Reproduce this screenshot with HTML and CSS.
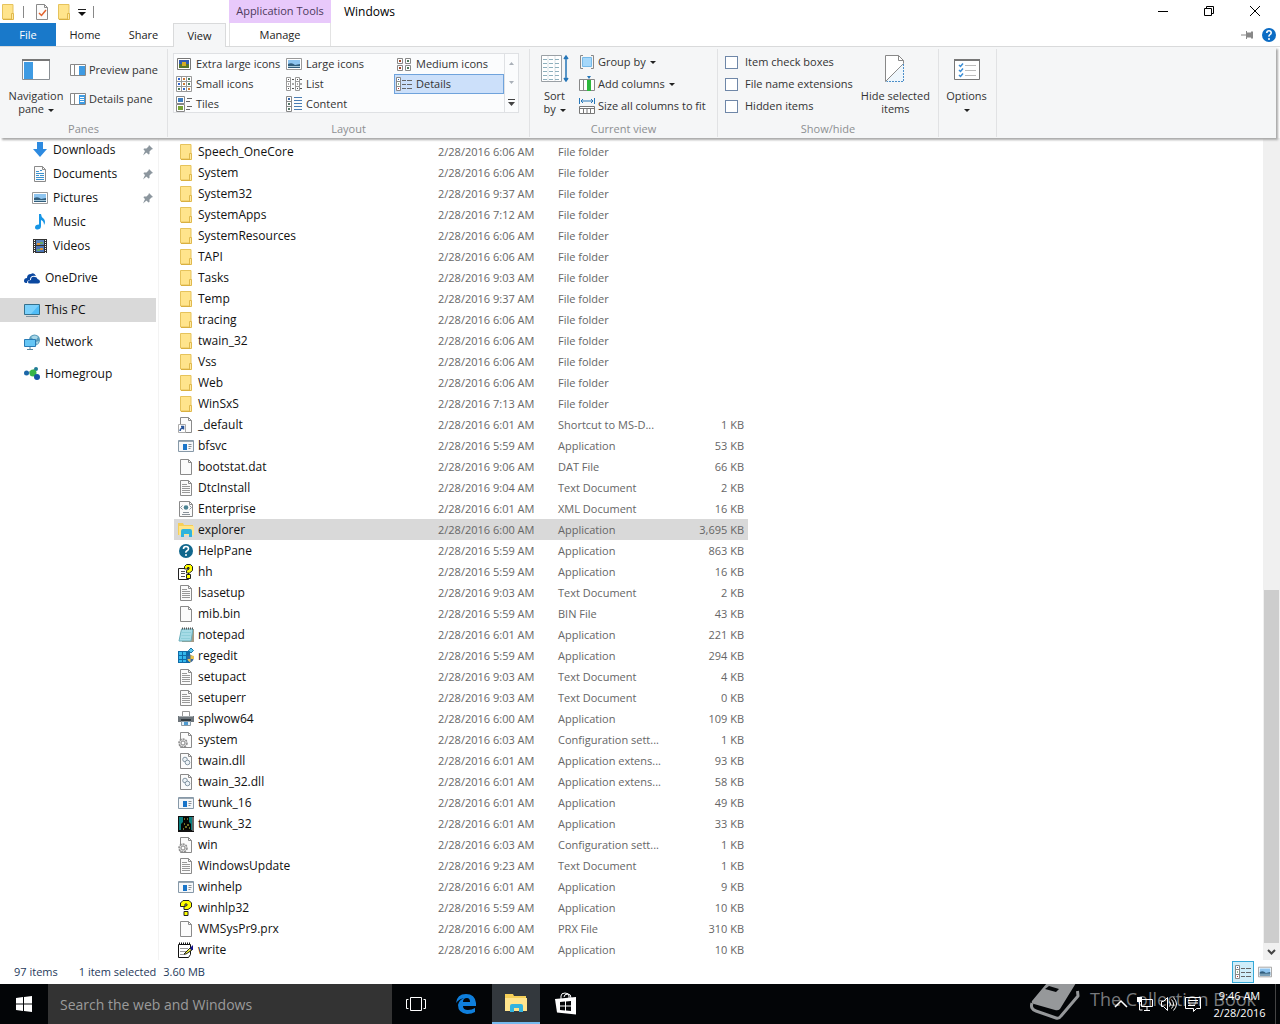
FILE: index.html
```html
<!DOCTYPE html>
<html lang="en">
<head>
<meta charset="utf-8">
<title>Windows</title>
<link rel="stylesheet" href="styles.css">
</head>
<body>
<svg class="sprite" aria-hidden="true">
  <symbol id="folder" viewBox="0 0 16 16"><path d="M2.500.5h10.500v14.500h-10.500z" fill="#ffe48c" stroke="#e6c35c"/><path d="M11.500 9.500h2v6h-2z" fill="#ffe9a2" stroke="#e0b94d"/><path d="M3 15.500h9" stroke="#d9b040"/></symbol>
  <symbol id="page" viewBox="0 0 16 16"><path d="M2.500.5h8l3 3v12h-11z" fill="#fbfbfb" stroke="#8a8a8a"/><path d="M10.500.5v3h3" fill="none" stroke="#8a8a8a"/></symbol>
  <symbol id="text" viewBox="0 0 16 16"><use href="#page"/><path d="M4 4.500h5M4 6.500h8M4 8.500h8M4 10.500h8M4 12.500h8" stroke="#999"/></symbol>
  <symbol id="shortcut" viewBox="0 0 16 16"><use href="#page"/><path d="M.5 7.500h7v8h-7z" fill="#fff" stroke="#aaa"/><path d="M2 14q0-2 3-4M3 9.500h2.500v3" fill="none" stroke="#2a5599" stroke-width="1.500"/></symbol>
  <symbol id="app" viewBox="0 0 16 16"><path d="M.5 2.500h15v11h-15z" fill="#f4f7fa" stroke="#8799a8"/><path d="M1 3.500h14" stroke="#9aa7b2"/><path d="M5 6h4v6h-4z" fill="#1874c9"/><path d="M10.500 6.500h3M10.500 8.500h3M10.500 10.500h2" stroke="#8a9096"/></symbol>
  <symbol id="xml" viewBox="0 0 16 16"><path d="M1.500.5h10l3 3v12h-13z" fill="#fbfbfb" stroke="#8a8a8a"/><path d="M11.500.5v3h3" fill="none" stroke="#8a8a8a"/><path d="M4.500 4.500l-2 2 2 2M11.500 4.500l2 2-2 2M5 11.500h6M4 13.500h8" fill="none" stroke="#8a9299"/><circle cx="8" cy="6.500" r="2.300" fill="#4b8292"/></symbol>
  <symbol id="explorer" viewBox="0 0 16 16"><path d="M0 1h5l1 2h9v10h-15z" fill="#f6cf57"/><path d="M1 4h15v9h-15z" fill="#ffe589"/><path d="M3 15v-6q0-2 2-2h7q2 0 2 2v6h-3v-3h-5v3z" fill="#2fb3dd"/></symbol>
  <symbol id="help" viewBox="0 0 16 16"><circle cx="8" cy="8" r="7" fill="#11678d"/><path d="M5.500 6q0-2.500 2.500-2.500t2.500 2.300q0 1.200-1.500 2t-1 2" fill="none" stroke="#fff" stroke-width="1.600"/><circle cx="8" cy="12" r="1" fill="#fff"/></symbol>
  <symbol id="question" viewBox="0 0 16 16"><path d="M2.500 6.500V3L5 .5h6L13.500 3v4L10 9.500H6v-3l3-1V4H7v2.500zM6 11.500h4v4H6z" fill="#ff0" stroke="#222"/></symbol>
  <symbol id="hh" viewBox="0 0 16 16"><path d="M.5 4.500h10v11h-10z" fill="#fff" stroke="#222"/><path d="M3 7.500h4M3 9.500h4M3 12.500h4" stroke="#555"/><path d="M6.500 5V2.500l2-2h4l2 2v4l-3 2.500h-3V6.500l2.500-1.500V3.500H9.500V5zM8.500 10.500h4v4h-4z" fill="#ff0" stroke="#222"/></symbol>
  <symbol id="notepad" viewBox="0 0 16 16"><path d="M4 2h12v13h-12z" fill="#a59a84"/><path d="M3.500 2h11.500l-2 12h-12z" fill="#a6dbe6" stroke="#6baebb"/><path d="M4 5.500h9M3.500 8.500h9M3 11.500h9" stroke="#8fcfda"/><path d="M4 1.500h11" stroke="#555" stroke-dasharray="1 1" stroke-width="2"/></symbol>
  <symbol id="regedit" viewBox="0 0 16 16"><path d="M0 3h12v12h-12z" fill="#106ba8"/><path d="M1 4h3v3h-3zM5 4h3v3h-3zM1 8h3v3h-3zM5 8h3v3h-3zM1 12h3v2h-3zM5 12h3v2h-3z" fill="#35b9ed"/><path d="M13 0l2.500 2.500-2.500 2.500-2.500-2.500z" fill="#5ac8f0" stroke="#1a77a8"/><path d="M9 8q3 0 3.500-1.500 1 1.500 3.500 1.500 0 5-3.500 6.500-3.500-1.500-3.500-6.500" fill="#39699d"/><path d="M12.500 6.500q1 1.500 3.500 1.500v3h-3.500v3.500q-2.500-1-3.200-3.500h3.200z" fill="#e8c34e"/></symbol>
  <symbol id="printer" viewBox="0 0 16 16"><path d="M4.500.5h7v5h-7z" fill="#fff" stroke="#999"/><path d="M0 5h16v6h-16z" fill="#6d757b"/><path d="M1 5.500h14" stroke="#a7adb1"/><path d="M3 8h10v2h-10z" fill="#333b41"/><path d="M3.500 10.500h9v4h-9z" fill="#e5f1f9" stroke="#8c9ba5"/><path d="M6 11h4v3h-4z" fill="#4d9ad1"/></symbol>
  <symbol id="config" viewBox="0 0 16 16"><use href="#page"/><circle cx="5" cy="11" r="4" fill="#ddd" stroke="#8a8a8a" stroke-width="1.500" stroke-dasharray="2 1"/><circle cx="5" cy="11" r="2" fill="#fff" stroke="#888"/></symbol>
  <symbol id="dll" viewBox="0 0 16 16"><use href="#page"/><circle cx="7" cy="6.500" r="2.300" fill="#edf3f7" stroke="#8596a3"/><circle cx="9.500" cy="9.500" r="2.300" fill="#edf3f7" stroke="#8596a3"/></symbol>
  <symbol id="twunk" viewBox="0 0 16 16"><path d="M0 0h16v16h-16z" fill="#111"/><path d="M1 1h13v13h-13z" fill="#087f80"/><path d="M5 1h6v5l2 2v6h-10v-6l2-2z" fill="#050505"/><path d="M6 3h1M9 3h1M6 8h1M9 9h2M7 11h2M5 13h1M11 12h1" stroke="#dbd94b"/><path d="M15 1v14" stroke="#bbb"/></symbol>
  <symbol id="write" viewBox="0 0 16 16"><path d="M.5 2.500h12v10l-2 3h-10z" fill="#fff" stroke="#111"/><path d="M1 1.500h12" stroke="#111" stroke-dasharray="1 1" stroke-width="2"/><path d="M2 6.500h8M2 9.500h6M2 12.500h5" stroke="#999"/><path d="M6 12l6-6 2 2-6 4z" fill="#ee3" stroke="#222"/><path d="M12 6l3-3v5h-2z" fill="#14148a"/></symbol>
  <symbol id="download" viewBox="0 0 16 16"><path d="M5 0h6v7h4l-7 8-7-8h4z" fill="#2d8ae0"/></symbol>
  <symbol id="document" viewBox="0 0 16 16"><use href="#page"/><path d="M4 5.500h3M8 4.500h2M4 7.500h8M4 9.500h3M8 9.500h4M4 11.500h8M4 13.500h8" stroke="#3a92cf"/></symbol>
  <symbol id="picture" viewBox="0 0 16 16"><path d="M.5 2.500h15v11h-15z" fill="#fff" stroke="#999"/><path d="M2 4h12v8h-12z" fill="#8ec5f0"/><path d="M2 8q4-2 7 1l5-1v4h-12z" fill="#315d7c"/><path d="M2 10.500h12" stroke="#a9cbdc"/></symbol>
  <symbol id="music" viewBox="0 0 16 16"><path d="M7 0h2q0 3 3 5 2 3 0 6 0-4-3-5v6q0 3-3 3.500-3 0-3-2 0-3 4-3z" fill="#1796e6"/></symbol>
  <symbol id="video" viewBox="0 0 16 16"><path d="M1 1h14v14h-14z" fill="#333"/><path d="M2.500 2v13M13.500 2v13" stroke="#fff" stroke-dasharray="1 1"/><path d="M4 2h8v5h-8z" fill="#5c86bd"/><path d="M4 8h8v6h-8z" fill="#4b75b8"/><path d="M5 5h3v2h-3zM8 10h3v2h-3z" fill="#d99237"/><path d="M8 4h3v2h-3zM5 11h3v2h-3z" fill="#6ba765"/></symbol>
  <symbol id="onedrive" viewBox="0 0 16 16"><path d="M0 11q0-3 3-3 0-4 4-4 3-2 5 2-6-1-6 4-3 0-3 3-3 0-3-2" fill="#0b48a0"/><path d="M4 12q0-2 3-2 0-4 4-3 2 0 2.500 2 2.500.5 2.500 2.500 0 2-2 2h-8q-2 0-2-1.500" fill="#0b48a0"/></symbol>
  <symbol id="pc" viewBox="0 0 16 16"><path d="M.5 2.500h15v10h-15z" fill="#4fbcf7" stroke="#34708d"/><path d="M1 3h14l-8 9h-6z" fill="#7ad0fb"/><path d="M2 14.500h12" stroke="#8294a0"/></symbol>
  <symbol id="network" viewBox="0 0 16 16"><circle cx="10.500" cy="6" r="5.500" fill="#5b9ebd"/><path d="M7 3q4-3 7 0l-2 3-3-1zM12 8l3-1-2 4z" fill="#a8d7e8"/><path d="M.5 5.500h11v7h-11z" fill="#66c6f5" stroke="#287bb5"/><path d="M6 13v2M3 15.500h6" stroke="#57859f"/></symbol>
  <symbol id="homegroup" viewBox="0 0 16 16"><path d="M3 7l6-1 4-4M9 6l4 6" stroke="#9ec5d9" stroke-width="2"/><circle cx="2.500" cy="7" r="2.500" fill="#1c67a8"/><circle cx="12" cy="3" r="2" fill="#217c96"/><circle cx="9" cy="7" r="3.500" fill="#38b548"/><circle cx="13" cy="11" r="3" fill="#1755a5"/></symbol>
  <symbol id="pin" viewBox="0 0 12 12"><path d="M7 1l4 4-1.500.5-2 2v2.500l-1 .5-5-5 .5-1h2.500l2-2zM3 7l1.500 1.500-3.500 3z" fill="#8c969e"/></symbol>
  <symbol id="grid6" viewBox="0 0 16 16"><path d="M1.500 2.500h5v5h-5zM9.500 2.500h5v5h-5zM1.500 9.500h5v5h-5zM9.500 9.500h5v5h-5z" fill="#fff" stroke="#888"/><path d="M3 5h2M3 12h2" stroke="#a04a2c" stroke-width="2"/><path d="M11 5h2M11 12h2" stroke="#4e7958" stroke-width="2"/></symbol>
  <symbol id="grid9" viewBox="0 0 16 16"><path d="M.5.500h15v15h-15zM5.500.5v15M10.500.5v15M.5 5.500h15M.5 10.500h15" fill="#fff" stroke="#999"/><path d="M2 3h2M2 8h2M7 13h2" stroke="#36c" stroke-width="2"/><path d="M7 3h2M7 8h2M12 13h2" stroke="#c73" stroke-width="2"/><path d="M12 3h2M12 8h2M2 13h2" stroke="#475" stroke-width="2"/></symbol>
  <symbol id="xlicon" viewBox="0 0 16 16"><path d="M1.500 2.500h13v11h-13z" fill="#fff" stroke="#777"/><path d="M3 4h10v8h-10z" fill="#315bb0"/><path d="M3 8h10v4h-10z" fill="#56752c"/><path d="M6 6h4v4h-4z" fill="#d4ac26"/></symbol>
  <symbol id="list" viewBox="0 0 16 16"><path d="M.5 1.500h4v13h-4zM9.500 1.500h4v13h-4zM.5 5.500h4M.5 10.500h4M9.500 5.500h4M9.500 10.500h4" fill="#fff" stroke="#999"/><path d="M2 3.500h1M2 8h1M2 12.500h1M11 3.500h1M11 8h1M11 12.500h1M6 3.500h2M6 8h2M6 12.500h2M14 3.500h2M14 8h2M14 12.500h2" stroke="#555"/></symbol>
  <symbol id="details" viewBox="0 0 16 16"><path d="M.5 1.500h4v13h-4zM.5 5.500h4M.5 10.500h4" fill="#fff" stroke="#888"/><path d="M2 3.500h1" stroke="#36a"/><path d="M2 8h1" stroke="#272"/><path d="M2 12.500h1" stroke="#b33"/><path d="M6 4.500h4M11 4.500h5M6 8.500h4M11 8.500h5M6 12.500h4M11 12.500h5" stroke="#666"/></symbol>
  <symbol id="tiles" viewBox="0 0 16 16"><path d="M.5.500h8v7h-8zM.5 8.500h8v7h-8z" fill="#fff" stroke="#888"/><path d="M2 2h5v4h-5z" fill="#3e7ec0"/><path d="M2 10h5v4h-5z" fill="#76a336"/><path d="M11 2.500h5M10 5.500h4M11 10.500h5M10 13.500h4" stroke="#666"/></symbol>
  <symbol id="content" viewBox="0 0 16 16"><path d="M.5.500h5v15h-5zM.5 5.500h5M.5 10.500h5" fill="#fff" stroke="#888"/><path d="M2 3h2" stroke="#36a" stroke-width="2"/><path d="M2 8h2M2 13h2" stroke="#576" stroke-width="2"/><path d="M8 1.500h8M8 4.500h8M8 7.500h8M8 10.500h8M8 13.500h8" stroke="#4a7db3"/></symbol>
</svg>

<header class="titlebar">
  <div class="quick">
    <svg class="i16"><use href="#folder"/></svg>
    <span class="bar"></span>
    <svg class="i16" viewBox="0 0 16 16"><use href="#page"/><path d="M5 9l2.500 2.500L12 6" fill="none" stroke="#e2622d" stroke-width="1.500"/></svg>
    <svg class="i16"><use href="#folder"/></svg>
    <svg class="qdrop" viewBox="0 0 8 8"><path d="M0 1.500h8" stroke="#222"/><path d="M0 4h8l-4 4z" fill="#111"/></svg>
    <span class="bar"></span>
  </div>
  <div class="context">Application Tools</div>
  <h1 class="title">Windows</h1>
  <div class="winbtns">
    <button aria-label="Minimize"><svg viewBox="0 0 10 10"><path d="M0 5.500h10" stroke="#000"/></svg></button>
    <button aria-label="Restore"><svg viewBox="0 0 10 10"><path d="M.5 2.500h7v7h-7zM2.500 2.500v-2h7v7h-2" fill="none" stroke="#000"/></svg></button>
    <button aria-label="Close"><svg viewBox="0 0 10 10"><path d="M0 0l10 10M10 0l-10 10" stroke="#000"/></svg></button>
  </div>
</header>

<nav class="tabs">
  <button class="tab file">File</button>
  <button class="tab home">Home</button>
  <button class="tab share">Share</button>
  <button class="tab view">View</button>
  <button class="tab manage">Manage</button>
  <div class="tabtools">
    <svg class="rpin" viewBox="0 0 12 8"><path d="M0 4h5" stroke="#888"/><path d="M5 0h1v1.500h4v-1h2v7h-2v-1h-4v1.500h-1z" fill="#888"/></svg>
    <svg class="rhelp" viewBox="0 0 16 16"><circle cx="8" cy="8" r="7" fill="#0c6cc4"/><path d="M5.800 6q0-2.200 2.200-2.200t2.200 2q0 1.200-1.200 1.800t-1 2" fill="none" stroke="#fff" stroke-width="1.600"/><circle cx="8" cy="12" r="1" fill="#fff"/></svg>
  </div>
</nav>

<section class="ribbon">
  <div class="group g-panes">
    <div class="body">
      <button class="big nav-btn"><svg class="i28" viewBox="0 0 28 28"><path d="M.5 5.500h27v20h-27z" fill="#fff" stroke="#8a8f94"/><path d="M0 6h28" stroke="#777" stroke-width="2"/><path d="M2 8h9v17h-9z" fill="#3f9be3"/></svg><span>Navigation<br>pane <i class="caret"></i></span></button>
      <div class="stack wide">
        <button class="small"><svg class="i16" viewBox="0 0 16 16"><path d="M.5 2.500h15v11h-15zM4.500 3v10" fill="#fff" stroke="#888"/><path d="M9 4h6v9h-6z" fill="#3f9be3"/></svg>Preview pane</button>
        <button class="small"><svg class="i16" viewBox="0 0 16 16"><path d="M.5 2.500h15v11h-15zM4.500 3v10" fill="#fff" stroke="#888"/><path d="M9 4h6v9h-6z" fill="#3f9be3"/><path d="M10 6.500h4M10 8.500h4M10 10.500h4" stroke="#fff"/></svg>Details pane</button>
      </div>
    </div>
    <h2>Panes</h2>
  </div>
  <div class="group g-layout">
    <div class="body">
      <div class="gallery">
        <div class="options">
          <button><svg class="i16"><use href="#xlicon"/></svg>Extra large icons</button>
          <button><svg class="i16"><use href="#picture"/></svg>Large icons</button>
          <button><svg class="i16"><use href="#grid6"/></svg>Medium icons</button>
          <button><svg class="i16"><use href="#grid9"/></svg>Small icons</button>
          <button><svg class="i16"><use href="#list"/></svg>List</button>
          <button class="on"><svg class="i16"><use href="#details"/></svg>Details</button>
          <button><svg class="i16"><use href="#tiles"/></svg>Tiles</button>
          <button><svg class="i16"><use href="#content"/></svg>Content</button>
        </div>
        <div class="steppers">
          <button aria-label="Scroll up"><svg viewBox="0 0 7 7"><path d="M1 5h5l-2.500-3z" fill="#aab0b8"/></svg></button>
          <button aria-label="Scroll down"><svg viewBox="0 0 7 7"><path d="M1 2h5l-2.500 3z" fill="#aab0b8"/></svg></button>
          <button aria-label="More layouts"><svg viewBox="0 0 7 7"><path d="M0 .5h7" stroke="#444"/><path d="M0 3h7l-3.500 4z" fill="#444"/></svg></button>
        </div>
      </div>
    </div>
    <h2>Layout</h2>
  </div>
  <div class="group g-view">
    <div class="body">
      <button class="big sort-btn"><svg class="i28" viewBox="0 0 28 28"><path d="M.5 1.500h20v26h-20z" fill="#fff" stroke="#9aa0a5"/><path d="M7 2v25M14 2v25" stroke="#dde3e7"/><path d="M2 5.500h17M2 9.500h17M2 13.500h17M2 17.500h17M2 21.500h17M2 25.500h17" stroke="#8fb0bd" stroke-dasharray="4 2"/><path d="M25 4v20M23 5l2-3 2 3M23 24l2 3 2-3" fill="#2576b8" stroke="#2576b8" stroke-width="1.500"/></svg><span>Sort<br>by <i class="caret"></i></span></button>
      <div class="stack">
        <button class="small"><svg class="i16" viewBox="0 0 16 16"><path d="M4 1.500h-2.500v13h2.500M12 1.500h2.500v13h-2.500" fill="none" stroke="#888"/><path d="M3.500 3.500h9v9h-9z" fill="#a5d8fb" stroke="#76b9e8"/></svg>Group by <i class="caret"></i></button>
        <button class="small"><svg class="i16" viewBox="0 0 16 16"><path d="M.5 3.500h15v11h-15zM4.500 4v10" fill="#fff" stroke="#888"/><path d="M8 4h4v11h-4z" fill="#2db83d"/><path d="M8 0h4l-2 3z" fill="#2576b8"/></svg>Add columns <i class="caret"></i></button>
        <button class="small"><svg class="i16" viewBox="0 0 16 16"><path d="M.5 0v6M15.500 0v6M2 3h12M4 1l-2 2 2 2M12 1l2 2-2 2" fill="none" stroke="#2576b8"/><path d="M.5 8.500h15v7h-15zM1 10.500h14M4.500 11v5M8 11v5M11.500 11v5" fill="#fff" stroke="#777"/></svg>Size all columns to fit</button>
      </div>
    </div>
    <h2>Current view</h2>
  </div>
  <div class="group g-show">
    <div class="body">
      <div class="stack checks">
        <label><input type="checkbox">Item check boxes</label>
        <label><input type="checkbox">File name extensions</label>
        <label><input type="checkbox">Hidden items</label>
      </div>
      <button class="big hide-btn"><svg class="i28" viewBox="0 0 28 28"><path d="M4.500 27.500v-26h13l5 5v3l-18 18" fill="#fff" stroke="#888"/><path d="M17.500 1.500v5h5" fill="none" stroke="#888"/><path d="M22.500 10v17.500h-17z" fill="#eef6fc"/><path d="M22.500 10v17.500h-17" fill="none" stroke="#4d8fc9" stroke-dasharray="2 1"/></svg><span>Hide selected<br>items</span></button>
    </div>
    <h2>Show/hide</h2>
  </div>
  <div class="group g-options">
    <div class="body">
      <button class="big opt-btn"><svg class="i28" viewBox="0 0 28 28"><path d="M1.500 5.500h25v20h-25z" fill="#fff" stroke="#777"/><path d="M1 6h26" stroke="#777" stroke-width="2"/><path d="M6 11l1.500 1.500 2.500-3M6 16l1.500 1.500 2.500-3M6 21l1.500 1.500 2.500-3" fill="none" stroke="#3b8ed6" stroke-width="1.500"/><path d="M12 11.500h11M12 16.500h11M12 21.500h11" stroke="#bbb"/></svg><span>Options<br><i class="caret"></i></span></button>
    </div>
  </div>
</section>

<main class="content">
  <nav class="tree">
    <a class="sub" href="#downloads"><svg class="i16"><use href="#download"/></svg>Downloads<svg class="pin"><use href="#pin"/></svg></a>
    <a class="sub" href="#documents"><svg class="i16"><use href="#document"/></svg>Documents<svg class="pin"><use href="#pin"/></svg></a>
    <a class="sub" href="#pictures"><svg class="i16"><use href="#picture"/></svg>Pictures<svg class="pin"><use href="#pin"/></svg></a>
    <a class="sub" href="#music-library"><svg class="i16"><use href="#music"/></svg>Music</a>
    <a class="sub" href="#videos"><svg class="i16"><use href="#video"/></svg>Videos</a>
    <a class="root" href="#one-drive"><svg class="i16"><use href="#onedrive"/></svg>OneDrive</a>
    <a class="root current" href="#this-pc"><svg class="i16"><use href="#pc"/></svg>This PC</a>
    <a class="root" href="#network-places"><svg class="i16"><use href="#network"/></svg>Network</a>
    <a class="root" href="#home-group"><svg class="i16"><use href="#homegroup"/></svg>Homegroup</a>
  </nav>
  <div class="files">
    <table>
      <colgroup><col class="c-name"><col class="c-date"><col class="c-type"><col class="c-size"></colgroup>
      <tbody>
        <tr><td><svg class="i16"><use href="#folder"/></svg>Speech_OneCore</td><td>2/28/2016 6:06 AM</td><td>File folder</td><td></td></tr>
        <tr><td><svg class="i16"><use href="#folder"/></svg>System</td><td>2/28/2016 6:06 AM</td><td>File folder</td><td></td></tr>
        <tr><td><svg class="i16"><use href="#folder"/></svg>System32</td><td>2/28/2016 9:37 AM</td><td>File folder</td><td></td></tr>
        <tr><td><svg class="i16"><use href="#folder"/></svg>SystemApps</td><td>2/28/2016 7:12 AM</td><td>File folder</td><td></td></tr>
        <tr><td><svg class="i16"><use href="#folder"/></svg>SystemResources</td><td>2/28/2016 6:06 AM</td><td>File folder</td><td></td></tr>
        <tr><td><svg class="i16"><use href="#folder"/></svg>TAPI</td><td>2/28/2016 6:06 AM</td><td>File folder</td><td></td></tr>
        <tr><td><svg class="i16"><use href="#folder"/></svg>Tasks</td><td>2/28/2016 9:03 AM</td><td>File folder</td><td></td></tr>
        <tr><td><svg class="i16"><use href="#folder"/></svg>Temp</td><td>2/28/2016 9:37 AM</td><td>File folder</td><td></td></tr>
        <tr><td><svg class="i16"><use href="#folder"/></svg>tracing</td><td>2/28/2016 6:06 AM</td><td>File folder</td><td></td></tr>
        <tr><td><svg class="i16"><use href="#folder"/></svg>twain_32</td><td>2/28/2016 6:06 AM</td><td>File folder</td><td></td></tr>
        <tr><td><svg class="i16"><use href="#folder"/></svg>Vss</td><td>2/28/2016 6:06 AM</td><td>File folder</td><td></td></tr>
        <tr><td><svg class="i16"><use href="#folder"/></svg>Web</td><td>2/28/2016 6:06 AM</td><td>File folder</td><td></td></tr>
        <tr><td><svg class="i16"><use href="#folder"/></svg>WinSxS</td><td>2/28/2016 7:13 AM</td><td>File folder</td><td></td></tr>
        <tr><td><svg class="i16"><use href="#shortcut"/></svg>_default</td><td>2/28/2016 6:01 AM</td><td>Shortcut to MS-D...</td><td>1 KB</td></tr>
        <tr><td><svg class="i16"><use href="#app"/></svg>bfsvc</td><td>2/28/2016 5:59 AM</td><td>Application</td><td>53 KB</td></tr>
        <tr><td><svg class="i16"><use href="#page"/></svg>bootstat.dat</td><td>2/28/2016 9:06 AM</td><td>DAT File</td><td>66 KB</td></tr>
        <tr><td><svg class="i16"><use href="#text"/></svg>DtcInstall</td><td>2/28/2016 9:04 AM</td><td>Text Document</td><td>2 KB</td></tr>
        <tr><td><svg class="i16"><use href="#xml"/></svg>Enterprise</td><td>2/28/2016 6:01 AM</td><td>XML Document</td><td>16 KB</td></tr>
        <tr class="selected"><td><svg class="i16"><use href="#explorer"/></svg>explorer</td><td>2/28/2016 6:00 AM</td><td>Application</td><td>3,695 KB</td></tr>
        <tr><td><svg class="i16"><use href="#help"/></svg>HelpPane</td><td>2/28/2016 5:59 AM</td><td>Application</td><td>863 KB</td></tr>
        <tr><td><svg class="i16"><use href="#hh"/></svg>hh</td><td>2/28/2016 5:59 AM</td><td>Application</td><td>16 KB</td></tr>
        <tr><td><svg class="i16"><use href="#text"/></svg>lsasetup</td><td>2/28/2016 9:03 AM</td><td>Text Document</td><td>2 KB</td></tr>
        <tr><td><svg class="i16"><use href="#page"/></svg>mib.bin</td><td>2/28/2016 5:59 AM</td><td>BIN File</td><td>43 KB</td></tr>
        <tr><td><svg class="i16"><use href="#notepad"/></svg>notepad</td><td>2/28/2016 6:01 AM</td><td>Application</td><td>221 KB</td></tr>
        <tr><td><svg class="i16"><use href="#regedit"/></svg>regedit</td><td>2/28/2016 5:59 AM</td><td>Application</td><td>294 KB</td></tr>
        <tr><td><svg class="i16"><use href="#text"/></svg>setupact</td><td>2/28/2016 9:03 AM</td><td>Text Document</td><td>4 KB</td></tr>
        <tr><td><svg class="i16"><use href="#text"/></svg>setuperr</td><td>2/28/2016 9:03 AM</td><td>Text Document</td><td>0 KB</td></tr>
        <tr><td><svg class="i16"><use href="#printer"/></svg>splwow64</td><td>2/28/2016 6:00 AM</td><td>Application</td><td>109 KB</td></tr>
        <tr><td><svg class="i16"><use href="#config"/></svg>system</td><td>2/28/2016 6:03 AM</td><td>Configuration sett...</td><td>1 KB</td></tr>
        <tr><td><svg class="i16"><use href="#dll"/></svg>twain.dll</td><td>2/28/2016 6:01 AM</td><td>Application extens...</td><td>93 KB</td></tr>
        <tr><td><svg class="i16"><use href="#dll"/></svg>twain_32.dll</td><td>2/28/2016 6:01 AM</td><td>Application extens...</td><td>58 KB</td></tr>
        <tr><td><svg class="i16"><use href="#app"/></svg>twunk_16</td><td>2/28/2016 6:01 AM</td><td>Application</td><td>49 KB</td></tr>
        <tr><td><svg class="i16"><use href="#twunk"/></svg>twunk_32</td><td>2/28/2016 6:01 AM</td><td>Application</td><td>33 KB</td></tr>
        <tr><td><svg class="i16"><use href="#config"/></svg>win</td><td>2/28/2016 6:03 AM</td><td>Configuration sett...</td><td>1 KB</td></tr>
        <tr><td><svg class="i16"><use href="#text"/></svg>WindowsUpdate</td><td>2/28/2016 9:23 AM</td><td>Text Document</td><td>1 KB</td></tr>
        <tr><td><svg class="i16"><use href="#app"/></svg>winhelp</td><td>2/28/2016 6:01 AM</td><td>Application</td><td>9 KB</td></tr>
        <tr><td><svg class="i16"><use href="#question"/></svg>winhlp32</td><td>2/28/2016 5:59 AM</td><td>Application</td><td>10 KB</td></tr>
        <tr><td><svg class="i16"><use href="#page"/></svg>WMSysPr9.prx</td><td>2/28/2016 6:00 AM</td><td>PRX File</td><td>310 KB</td></tr>
        <tr><td><svg class="i16"><use href="#write"/></svg>write</td><td>2/28/2016 6:00 AM</td><td>Application</td><td>10 KB</td></tr>
      </tbody>
    </table>
  </div>
  <div class="scroll">
    <div class="before"></div>
    <div class="thumb"></div>
    <button aria-label="Scroll down"><svg viewBox="0 0 9 6"><path d="M1 1l3.500 3.500L8 1" fill="none" stroke="#444" stroke-width="2"/></svg></button>
  </div>
</main>

<footer class="status">
  <span class="count">97 items</span>
  <span>1 item selected</span>
  <span class="weight">3.60 MB</span>
  <div class="modes">
    <button class="on" aria-label="Details view"><svg class="i16"><use href="#details"/></svg></button>
    <button aria-label="Large icons view"><svg class="m14"><use href="#picture"/></svg></button>
  </div>
</footer>

<div class="taskbar">
  <button class="start" aria-label="Start"><svg viewBox="0 0 16 16"><path d="M0 2l7-1v6.500h-7zM8 1l8-1v7.500h-8zM0 8.500h7v6.500l-7-1zM8 8.500h8v7.500l-8-1z" fill="#fff"/></svg></button>
  <input class="search" type="text" aria-label="Search" placeholder="Search the web and Windows">
  <div class="tasks">
    <button class="task" aria-label="Task view"><svg class="t20" viewBox="0 0 20 20"><path d="M4.500 3.500h11v13h-11zM2.500 5.500h-2v9h2M17.500 5.500h2v9h-2" fill="none" stroke="#fff"/></svg></button>
    <button class="task" aria-label="Edge"><svg class="t20" viewBox="0 0 20 20"><path d="M0 9Q1 0 10 0q9 0 10 9v3H7q0 4 5 4 4 0 7-2v4q-3 2-8 2-9-1-9-9 1-5 6-7-5 1-8 5M7 8h7q0-4-3-4-4 0-4 4" fill="#0f7fdc"/></svg></button>
    <button class="task active" aria-label="File Explorer"><svg class="t24" viewBox="0 0 24 24"><path d="M1 3h8l1 2h12v15h-21z" fill="#f5cf58"/><path d="M1 7h22v13h-22z" fill="#ffe48d"/><path d="M6 21v-6q0-2 2-2h9q2 0 2 2v6h-4v-4h-5v4z" fill="#33b3df"/></svg></button>
    <button class="task" aria-label="Store"><svg class="t24" viewBox="0 0 24 24"><path d="M7 7V4q0-3 4-3t4 3v3M10 5q0-3 4-3 3 0 3 4" fill="none" stroke="#fff"/><path d="M1 7l21-2v17.500l-19-2z" fill="#fff"/><path d="M6 10l5-.5v4h-5zM12 9.500l5-.5v4.500h-5zM6 14.500h5v4l-5-.5zM12 14.500h5v4.500l-5-.5z" fill="#050608"/></svg></button>
  </div>
  <div class="tray">
    <svg viewBox="0 0 16 16"><path d="M2 11l6-6 6 6" fill="none" stroke="#fff" stroke-width="1.500"/></svg>
    <svg viewBox="0 0 16 16"><path d="M4.500 3.500h11v7h-11zM10 11v3M7 14.500h6M2.500 6v8h3" fill="none" stroke="#fff"/><path d="M0 1h5v5h-5z" fill="#fff"/></svg>
    <svg viewBox="0 0 16 16"><path d="M.5 5.500h2l4-4v13l-4-4h-2zM8.500 5.500q2 2.500 0 5M10.500 3.500q4 4.500 0 9M12.500 1.500q6 6.500 0 13" fill="none" stroke="#fff"/></svg>
    <svg viewBox="0 0 16 16"><path d="M.5 1.500h15v11h-4l-3 3v-3h-8zM3 4.500h10M3 7h10M3 9.500h7" fill="none" stroke="#fff"/></svg>
  </div>
  <div class="clock"><time>9:46 AM</time><time>2/28/2016</time></div>
  <div class="brand">
    <svg viewBox="0 0 50 38"><path d="M17-1h29L30 25q-2 2-5 1L4 20q-3-1-2-3z" fill="#96989a"/><path d="M19 2l10 3-3 3-11-3z" fill="#05070a"/><path d="M2 19q-2 6 4 8l20 7q3 1 5-2l17-20-.500-5" fill="none" stroke="#96989a" stroke-width="3" stroke-linejoin="round"/></svg>
    <span>The Collection Book</span>
  </div>
</div>
</body>
</html>
```
FILE: styles.css
```css
* { box-sizing: border-box; }

body {
  margin: 0;
  min-height: 100vh;
  display: flex;
  flex-direction: column;
  background: #fff;
  color: #222;
  font: 12px/16px "Open Sans", "Noto Sans", sans-serif;
}

button {
  margin: 0;
  padding: 0;
  border: 0;
  background: none;
  color: inherit;
  font: inherit;
  display: flex;
  align-items: center;
  white-space: nowrap;
}

a { color: inherit; text-decoration: none; }
svg { display: block; flex: none; }
.sprite { position: absolute; width: 0; height: 0; }
.i16 { width: 16px; height: 16px; }
.i28 { width: 28px; height: 28px; }

.caret {
  display: inline-block;
  margin-left: 1px;
  vertical-align: middle;
  border: 3px solid transparent;
  border-top-color: #222;
  border-bottom: 0;
}

/* Title bar */
.titlebar { display: flex; height: 23px; }
.quick { width: 229px; display: flex; align-items: center; gap: 6px; }
.quick .bar { width: 1px; height: 12px; margin: 0 4px 0 1px; background: #888; }
.qdrop { width: 8px; height: 8px; }
.context { width: 102px; height: 23px; background: #e8c9fb; color: #4c3a5c; font-size: 11px; line-height: 21px; text-align: center; white-space: nowrap; }
.title { margin: 0 0 0 13px; font-size: 12px; font-weight: 400; line-height: 24px; color: #000; }
.winbtns { display: flex; margin-left: auto; padding-right: 2px; }
.winbtns button { width: 46px; height: 21px; justify-content: center; }
.winbtns svg { width: 10px; height: 10px; }

/* Tabs */
.tabs { display: flex; height: 24px; border-bottom: 1px solid #d9dadb; font-size: 11px; }
.tab { justify-content: center; height: 23px; }
.file { width: 56px; background: #1979ca; color: #fff; }
.home { width: 58px; }
.share { width: 59px; }
.view { width: 53px; height: 24px; background: #f5f6f7; border: 1px solid #d9dadb; border-bottom: 0; }
.manage { width: 102px; margin-left: 3px; border: solid #e3e3e3; border-width: 0 1px; }
.tabtools { margin-left: auto; display: flex; align-items: center; gap: 8px; padding-right: 3px; }
.rpin { width: 12px; height: 8px; }
.rhelp { width: 16px; height: 16px; }

/* Ribbon */
.ribbon {
  position: relative;
  z-index: 1;
  display: flex;
  height: 91px;
  margin-right: 4px;
  background: #f5f6f7;
  color: #333;
  font-size: 11px;
  box-shadow: 2px 2px 2px #aaa;
}
.group { display: flex; flex-direction: column; justify-content: space-between; margin: 2px 0 1px; border-right: 1px solid #e1e2e4; }
.group .body { display: flex; padding-top: 5px; }
.group h2 { margin: 0; font-size: 11px; font-weight: 400; line-height: 16px; color: #8d8f92; text-align: center; }
.g-panes { width: 168px; }
.g-layout { width: 362px; }
.g-view { width: 188px; }
.g-show { width: 221px; }
.g-options { width: 58px; }

.big { flex-direction: column; gap: 7px; line-height: 13px; text-align: center; align-self: flex-start; }
.nav-btn { width: 70px; padding-left: 2px; }
.sort-btn { width: 49px; }
.hide-btn { flex: 1; }
.opt-btn { width: 55px; }

.stack { display: flex; flex-direction: column; margin-top: -3px; }
.small { height: 22px; gap: 3px; }
.wide { margin-top: 1px; }
.wide .small { height: 29px; }
.checks { padding-left: 7px; }
.checks label { display: flex; align-items: center; gap: 7px; height: 22px; white-space: nowrap; }
.checks input { appearance: none; width: 13px; height: 13px; margin: 0; border: 1px solid #6f87a8; background: #fff; }

.gallery { display: flex; width: 346px; height: 60px; margin: -1px 0 0 5px; border: 1px solid #dfe1e4; background: #fbfcfd; }
.options { flex: 1; display: grid; grid-template-columns: repeat(3, 110px); grid-auto-rows: 20px; }
.options button { gap: 4px; padding-left: 1px; border: 1px solid transparent; }
.options .on { background: #cce0fa; border-color: #6fa3dc; }
.steppers { width: 14px; display: flex; flex-direction: column; border-left: 1px solid #dfe1e4; }
.steppers button { flex: 1; justify-content: center; }
.steppers svg { width: 7px; height: 7px; }

/* Folder tree and file list */
.content { flex: 1; display: flex; }
.tree { width: 159px; padding-right: 2px; border-right: 1px solid #f3f3f3; color: #111; }
.tree a { display: flex; align-items: center; height: 24px; gap: 5px; padding-right: 2px; }
.tree .sub { padding-left: 32px; }
.tree .root { padding-left: 24px; margin-top: 8px; }
.tree .current { background: #d9d9d9; }
.tree .pin { width: 12px; height: 12px; margin-left: auto; }

.files { flex: 1; padding: 3px 0 0 15px; }
.files table { width: 574px; table-layout: fixed; border-collapse: collapse; color: #666; font-size: 11px; }
.c-name { width: 264px; }
.c-date { width: 120px; }
.c-type { width: 120px; }
.c-size { width: 70px; }
.files td { height: 21px; padding: 0; white-space: nowrap; }
.files td:first-child { display: flex; align-items: center; gap: 4px; padding-left: 4px; color: #111; font-size: 12px; }
.files td:last-child { padding-right: 4px; text-align: right; }
.files .selected { background: #d9d9d9; }

.scroll { width: 17px; display: flex; flex-direction: column; background: #f0f0f0; }
.before { flex: 452; }
.thumb { flex: 353; margin: 0 1px; background: #cdcdcd; }
.scroll button { height: 17px; justify-content: center; }
.scroll svg { width: 9px; height: 6px; }

/* Status bar */
.status { display: flex; align-items: center; height: 24px; padding-left: 14px; color: #1e395b; font-size: 11px; }
.count { margin-right: 21px; }
.weight { margin-left: 7px; }
.modes { display: flex; margin-left: auto; padding-right: 4px; }
.modes button { width: 22px; height: 22px; justify-content: center; }
.modes .on { background: #cfeefa; border: 1px solid #35a9d8; }
.m14 { width: 14px; height: 14px; }

/* Taskbar */
.taskbar { position: relative; display: flex; height: 40px; overflow: hidden; background: #030507; color: #fff; }
.start, .task { width: 48px; height: 40px; justify-content: center; }
.start svg { width: 16px; height: 16px; }
.search { width: 344px; height: 40px; padding: 0 12px; border: 0; background: #333; color: #fff; font: 14px/20px "Open Sans", "Noto Sans", sans-serif; }
.search::placeholder { color: #9b9b9b; opacity: 1; }
.tasks { display: flex; gap: 2px; }
.task.active { background: #33383d; border-bottom: 2px solid #76b9ed; }
.t20 { width: 20px; height: 20px; }
.t24 { width: 24px; height: 24px; }
.tray { position: relative; z-index: 1; margin-left: auto; display: flex; align-items: center; gap: 8px; }
.tray svg { width: 16px; height: 16px; }
.clock { position: relative; z-index: 1; display: flex; flex-direction: column; align-items: center; justify-content: center; width: 72px; margin: 0 4px 0 3px; border-right: 1px solid #444; font-size: 11px; }
.clock time { line-height: 17px; }
.brand { position: absolute; top: 0; right: 24px; display: flex; gap: 10px; color: #77797c; font-size: 18px; line-height: 30px; white-space: nowrap; }
.brand svg { width: 50px; height: 38px; }
```
